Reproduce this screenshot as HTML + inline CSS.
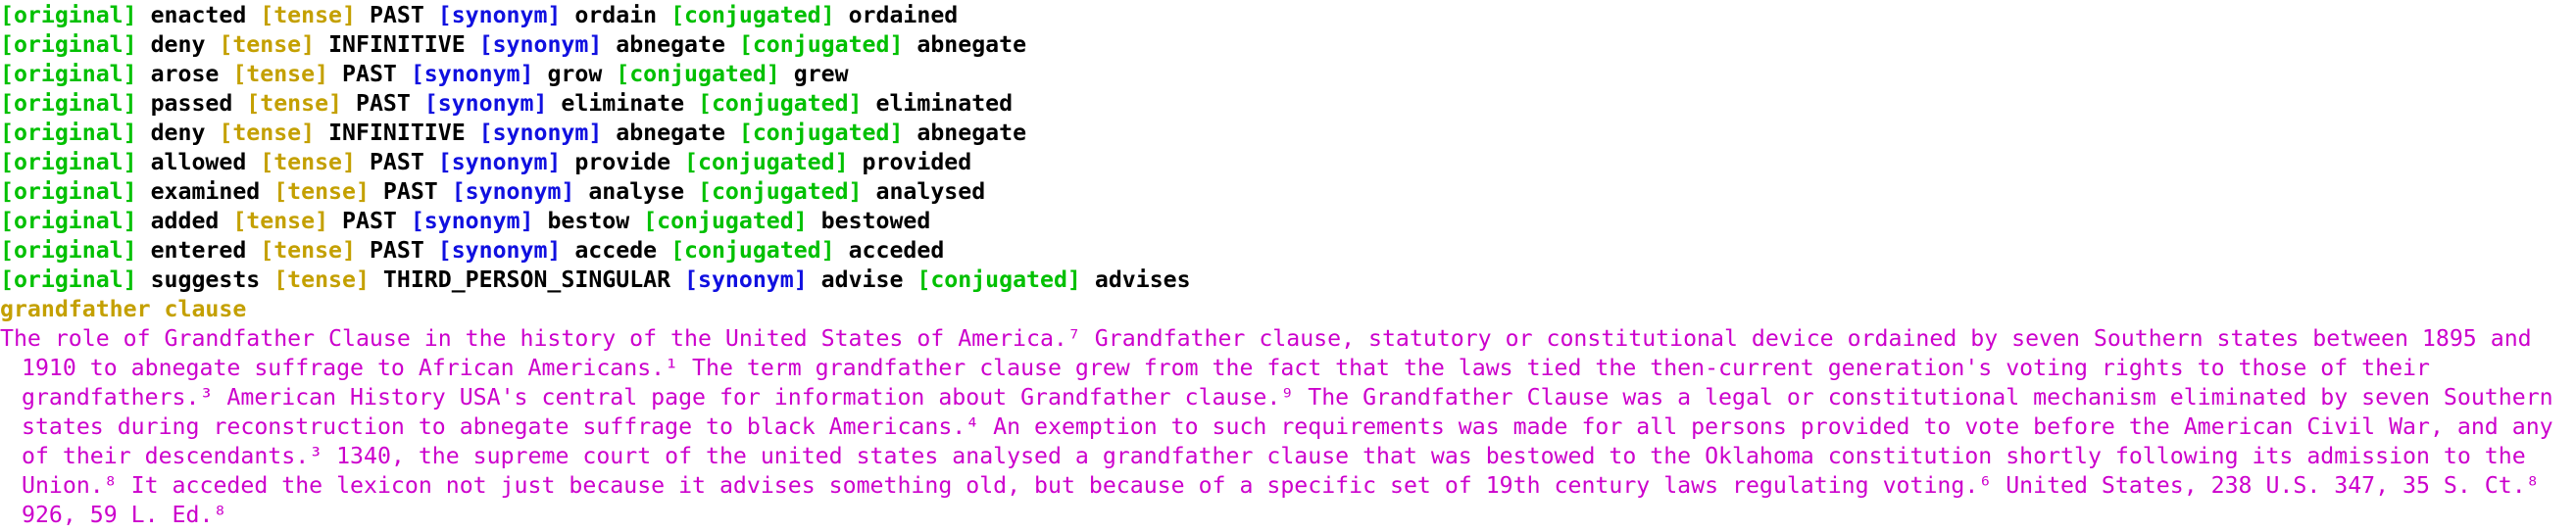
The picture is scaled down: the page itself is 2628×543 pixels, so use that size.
<!DOCTYPE html>
<html><head><meta charset="utf-8"><style>
html,body{margin:0;padding:0;background:#fff;width:2628px;height:542px;overflow:hidden}
body{font-family:"DejaVu Sans Mono","Liberation Mono",monospace;font-size:23.2px;line-height:30px;padding-top:1px}
div{white-space:pre;height:30px}
.b{font-weight:bold;color:#000}
.g{color:#00c000}.y{color:#c4a000}.u{color:#1010e0}
.m{color:#cc00cc;font-weight:normal}
.i{padding-left:22px}
</style></head><body><div class="b"><span class="g">[original]</span> enacted <span class="y">[tense]</span> PAST <span class="u">[synonym]</span> ordain <span class="g">[conjugated]</span> ordained</div><div class="b"><span class="g">[original]</span> deny <span class="y">[tense]</span> INFINITIVE <span class="u">[synonym]</span> abnegate <span class="g">[conjugated]</span> abnegate</div><div class="b"><span class="g">[original]</span> arose <span class="y">[tense]</span> PAST <span class="u">[synonym]</span> grow <span class="g">[conjugated]</span> grew</div><div class="b"><span class="g">[original]</span> passed <span class="y">[tense]</span> PAST <span class="u">[synonym]</span> eliminate <span class="g">[conjugated]</span> eliminated</div><div class="b"><span class="g">[original]</span> deny <span class="y">[tense]</span> INFINITIVE <span class="u">[synonym]</span> abnegate <span class="g">[conjugated]</span> abnegate</div><div class="b"><span class="g">[original]</span> allowed <span class="y">[tense]</span> PAST <span class="u">[synonym]</span> provide <span class="g">[conjugated]</span> provided</div><div class="b"><span class="g">[original]</span> examined <span class="y">[tense]</span> PAST <span class="u">[synonym]</span> analyse <span class="g">[conjugated]</span> analysed</div><div class="b"><span class="g">[original]</span> added <span class="y">[tense]</span> PAST <span class="u">[synonym]</span> bestow <span class="g">[conjugated]</span> bestowed</div><div class="b"><span class="g">[original]</span> entered <span class="y">[tense]</span> PAST <span class="u">[synonym]</span> accede <span class="g">[conjugated]</span> acceded</div><div class="b"><span class="g">[original]</span> suggests <span class="y">[tense]</span> THIRD_PERSON_SINGULAR <span class="u">[synonym]</span> advise <span class="g">[conjugated]</span> advises</div><div class="b y">grandfather clause</div><div class="m">The role of Grandfather Clause in the history of the United States of America.⁷ Grandfather clause, statutory or constitutional device ordained by seven Southern states between 1895 and</div><div class="m i">1910 to abnegate suffrage to African Americans.¹ The term grandfather clause grew from the fact that the laws tied the then-current generation's voting rights to those of their</div><div class="m i">grandfathers.³ American History USA's central page for information about Grandfather clause.⁹ The Grandfather Clause was a legal or constitutional mechanism eliminated by seven Southern</div><div class="m i">states during reconstruction to abnegate suffrage to black Americans.⁴ An exemption to such requirements was made for all persons provided to vote before the American Civil War, and any</div><div class="m i">of their descendants.³ 1340, the supreme court of the united states analysed a grandfather clause that was bestowed to the Oklahoma constitution shortly following its admission to the</div><div class="m i">Union.⁸ It acceded the lexicon not just because it advises something old, but because of a specific set of 19th century laws regulating voting.⁶ United States, 238 U.S. 347, 35 S. Ct.⁸</div><div class="m i">926, 59 L. Ed.⁸</div></body></html>
